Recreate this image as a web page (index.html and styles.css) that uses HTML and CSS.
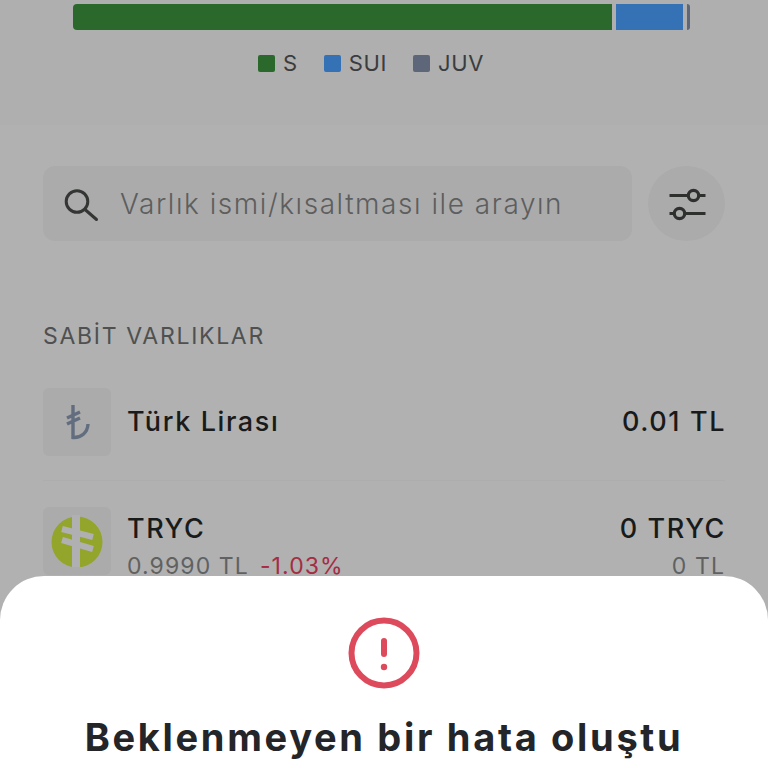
FILE: index.html
```html
<!DOCTYPE html>
<html lang="tr">
<head>
<meta charset="utf-8">
<title>Varlıklar</title>
<link rel="stylesheet" href="styles.css">
</head>
<body>
<div class="screen">
  <section class="summary">
    <div class="bar">
      <span class="seg seg-s"></span>
      <span class="seg seg-sui"></span>
      <span class="seg seg-juv"></span>
    </div>
    <div class="legend">
      <span class="legend-item"><i class="dot dot-s"></i>S</span>
      <span class="legend-item"><i class="dot dot-sui"></i>SUI</span>
      <span class="legend-item"><i class="dot dot-juv"></i>JUV</span>
    </div>
  </section>
  <section class="content">
    <div class="search-row">
      <div class="search">
        <svg class="search-icon" viewBox="0 0 36 36" width="36" height="36" fill="none" stroke="#343634" stroke-width="3" stroke-linecap="round"><circle cx="14" cy="15.5" r="10.8"/><path d="M22 23.5l11.5 10"/></svg>
        <span class="placeholder">Varlık ismi/kısaltması ile arayın</span>
      </div>
      <button class="filter" aria-label="Filtre">
        <svg viewBox="0 0 38 36" width="38" height="36" fill="#ababab" stroke="#2e302e" stroke-width="3.2"><path d="M1.5 9.5h36M1.5 27.5h36"/><circle cx="25.5" cy="9.5" r="5.2"/><circle cx="11.5" cy="27.5" r="5.2"/></svg>
      </button>
    </div>
    <h2 class="section-title">SABİT VARLIKLAR</h2>
    <div class="asset asset-first">
      <div class="asset-logo">
        <svg viewBox="0 0 30 40" width="30" height="40" fill="none" stroke="#626d7f" stroke-width="3.4"><path d="M11 3V35.5C19 36 25.5 31 26 22M5 16l13-6M5 22l13-6"/></svg>
      </div>
      <div class="asset-main"><span class="asset-name">Türk Lirası</span></div>
      <div class="asset-side"><span class="asset-name asset-total">0.01 TL</span></div>
    </div>
    <div class="asset asset-two-line">
      <div class="asset-logo">
        <svg viewBox="0 0 52 52" width="52" height="52"><circle cx="26" cy="27" r="25.5" fill="#94a52c"/><path d="M25 0v52" stroke="#b0b0b2" stroke-width="8"/><path d="M11 14l31 8M11 25l31 9" stroke="#b0b0b2" stroke-width="6"/></svg>
      </div>
      <div class="asset-main">
        <span class="asset-name">TRYC</span>
        <span class="asset-sub">0.9990 TL<em class="loss">-1.03%</em></span>
      </div>
      <div class="asset-side">
        <span class="asset-name asset-total">0 TRYC</span>
        <span class="asset-sub">0 TL</span>
      </div>
    </div>
  </section>
  <section class="sheet">
    <svg viewBox="0 0 72 72" width="72" height="72" fill="none" stroke="#dc4a5c"><circle cx="36" cy="36" r="32.5" stroke-width="6"/><path d="M36 24v13" stroke-width="6" stroke-linecap="round"/><circle cx="36" cy="50" r="3.200" fill="#dc4a5c" stroke="none"/></svg>
    <h1 class="sheet-title">Beklenmeyen bir hata oluştu</h1>
  </section>
</div>
</body>
</html>
```
FILE: styles.css
```css
* { box-sizing: border-box; }
html, body { margin: 0; padding: 0; }
body { width: 768px; height: 768px; overflow: hidden; font-family: Inter, "Liberation Sans", sans-serif; }
.screen { position: relative; width: 768px; height: 768px; overflow: hidden; background: #b1b1b1; }
.summary { height: 125px; padding: 4px 77px 0 73px; background: #aeafae; }
.bar { display: flex; gap: 4px; height: 26px; width: 618px; }
.seg { display: block; height: 100%; }
.seg-s { width: 539px; background: #2a692b; border-radius: 4px 0 0 4px; }
.seg-sui { width: 67px; background: #3471b5; }
.seg-juv { width: 3px; background: #5e6779; border-radius: 0 3px 3px 0; }
.legend { display: flex; justify-content: center; gap: 26px; margin-top: 23px; padding-right: 22px; height: 19px; }
.legend-item { display: flex; align-items: center; gap: 8px; font-size: 22px; color: #3a3c3e; letter-spacing: 0.6px; }
.dot { display: block; width: 17px; height: 17px; margin-top: 1px; border-radius: 2px; }
.dot-s { background: #2a692b; }
.dot-sui { background: #3471b5; }
.dot-juv { background: #5e6779; }
.content { padding: 41px 43px 0; }
.search-row { display: flex; gap: 16px; height: 75px; }
.search { flex: none; width: 589px; display: flex; align-items: center; gap: 21px; padding-left: 20px; background: #ababab; border-radius: 12px; }
.search-icon { flex: none; }
.placeholder { font-size: 28px; font-weight: 300; color: #5d5e5e; letter-spacing: 1.55px; white-space: nowrap; }
.filter { flex: none; width: 77px; height: 75px; padding: 0; display: flex; align-items: center; justify-content: center; border: 0; background: #ababab; border-radius: 50%; }
.section-title { margin: 81px 0 0; font-size: 23px; line-height: 28px; font-weight: 400; color: #4f5050; letter-spacing: 1.7px; }
.asset { display: flex; height: 68px; gap: 16px; margin-top: 51px; }
.asset-first { margin-top: 38px; position: relative; }
.asset-first::after { content: ""; position: absolute; left: 0; right: 0; bottom: -25px; height: 1px; background: #adadad; }
.asset-two-line .asset-main, .asset-two-line .asset-side { justify-content: flex-start; padding-top: 4px; }
.asset-logo { flex: none; width: 68px; height: 68px; display: flex; align-items: center; justify-content: center; background: #ababab; border-radius: 6px; }
.asset-main { flex: 1; display: flex; flex-direction: column; justify-content: center; }
.asset-side { display: flex; flex-direction: column; justify-content: center; align-items: flex-end; }
.asset-name { font-size: 27px; line-height: 36px; font-weight: 500; color: #191a1a; white-space: nowrap; letter-spacing: 1.6px; }
.asset-total { margin-right: -1px; }
.asset-sub { font-size: 23px; line-height: 39px; color: #606161; white-space: nowrap; letter-spacing: 1.1px; }
.loss { font-style: normal; color: #a52c44; margin-left: 11px; }
.sheet { position: absolute; left: 0; right: 0; top: 576px; bottom: 0; padding-top: 41px; display: flex; flex-direction: column; align-items: center; background: #fff; border-radius: 44px 44px 0 0; }
.sheet-title { margin: 25px 0 0; font-size: 38px; line-height: 46px; font-weight: 700; color: #232528; letter-spacing: 2.68px; white-space: nowrap; }
```
